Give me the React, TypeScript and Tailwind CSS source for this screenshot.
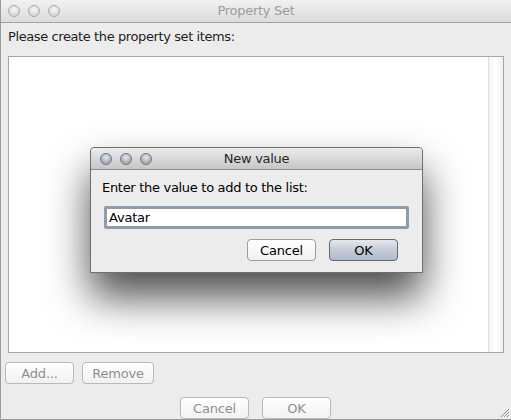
const font = "font-['Lucida_Grande','DejaVu_Sans',sans-serif]";

function Light({ active = false }: { active?: boolean }) {
  return (
    <span
      className={
        active
          ? "block w-[12px] h-[12px] rounded-full border border-[#6f7780] bg-[radial-gradient(circle_at_50%_35%,#e4e9ef_0%,#a9b2bc_60%,#8a939d_100%)]"
          : "block w-[12px] h-[12px] rounded-full border border-[#a9a9a9] bg-[radial-gradient(circle_at_50%_35%,#f6f6f6_0%,#dcdcdc_60%,#cfcfcf_100%)]"
      }
    />
  );
}

function Button({
  label,
  disabled = false,
  primary = false,
  wide = false,
}: {
  label: string;
  disabled?: boolean;
  primary?: boolean;
  wide?: boolean;
}) {
  const base = `${wide ? "w-[72px]" : "w-[69px]"} h-[22px] rounded-[4px] border flex items-center justify-center text-[13px] leading-none tracking-[-0.2px]`;
  if (primary)
    return (
      <div className={`${base} border-[#5f6873] bg-gradient-to-b from-[#e4e9ef] via-[#c3ccd7] to-[#b0bccb] text-black`}>
        {label}
      </div>
    );
  return (
    <div
      className={`${base} ${
        disabled ? "border-[#b9b9b9] text-[#8f8f8f]" : "border-[#9c9c9c] text-black"
      } bg-gradient-to-b from-white to-[#f1f1f1]`}
    >
      {label}
    </div>
  );
}

export default function App() {
  return (
    <div className={`relative w-[511px] h-[420px] bg-[#ececec] border-l border-b border-[#9a9a9a] flex flex-col overflow-hidden ${font}`}>
      {/* title bar */}
      <div className="h-[23px] shrink-0 relative flex items-center border-b border-[#a3a3a3] bg-gradient-to-b from-[#f1f1f1] to-[#dcdcdc]">
        <div className="flex gap-[8px] pl-[7px]">
          <Light />
          <Light />
          <Light />
        </div>
        <span className="absolute inset-x-0 text-center text-[13px] tracking-[-0.3px] text-[#9b9b9b]">Property Set</span>
      </div>

      <div className="px-[7px] pt-[4px] text-[13px] tracking-[-0.4px] text-[#1e1e1e] h-[33px]">
        Please create the property set items:
      </div>

      {/* list */}
      <div className="mx-[7px] h-[297px] border border-[#a5a5a5] bg-white flex justify-end">
        <div className="w-[15px] border-l border-[#dedede] bg-gradient-to-r from-[#f4f4f4] via-white to-[#efefef]" />
      </div>

      <div className="flex gap-[8px] pl-[4px] pt-[9px]">
        <Button label="Add..." disabled />
        <Button label="Remove" disabled wide />
      </div>

      <div className="flex gap-[13px] pl-[179px] pt-[13px]">
        <Button label="Cancel" disabled />
        <Button label="OK" disabled />
      </div>

      {/* resize grip */}
      <svg className="absolute right-[1px] bottom-[1px]" width="12" height="12" viewBox="0 0 12 12">
        <path d="M11 3 L3 11 M11 6 L6 11 M11 9 L9 11" stroke="#8d8d8d" strokeWidth="1" />
      </svg>

      {/* New value dialog */}
      <div className="absolute left-[89px] top-[147px] w-[333px] h-[126px] border border-[#6e6e6e] bg-[#ececec] rounded-t-[4px] shadow-[0_24px_42px_rgba(0,0,0,0.7)] flex flex-col">
        <div className="h-[22px] shrink-0 relative flex items-center border-b border-[#8e8e8e] rounded-t-[4px] bg-gradient-to-b from-[#ececec] to-[#c6c6c6]">
          <div className="flex gap-[8px] pl-[9px]">
            <Light active />
            <Light active />
            <Light active />
          </div>
          <span className="absolute inset-x-0 text-center text-[13px] tracking-[-0.3px] text-[#262626]">New value</span>
        </div>
        <div className="px-[11px] pt-[8px] text-[13px] tracking-[-0.3px] text-black h-[36px]">
          Enter the value to add to the list:
        </div>
        <div className="mx-[13px] h-[23px] rounded-[2px] border-[3px] border-[#8f9cab] bg-white flex items-center pl-[2px] text-[13px] tracking-[-0.2px] text-black">
          Avatar
        </div>
        <div className="flex justify-end gap-[13px] pr-[24px] pt-[10px]">
          <Button label="Cancel" />
          <Button label="OK" primary />
        </div>
      </div>
    </div>
  );
}
